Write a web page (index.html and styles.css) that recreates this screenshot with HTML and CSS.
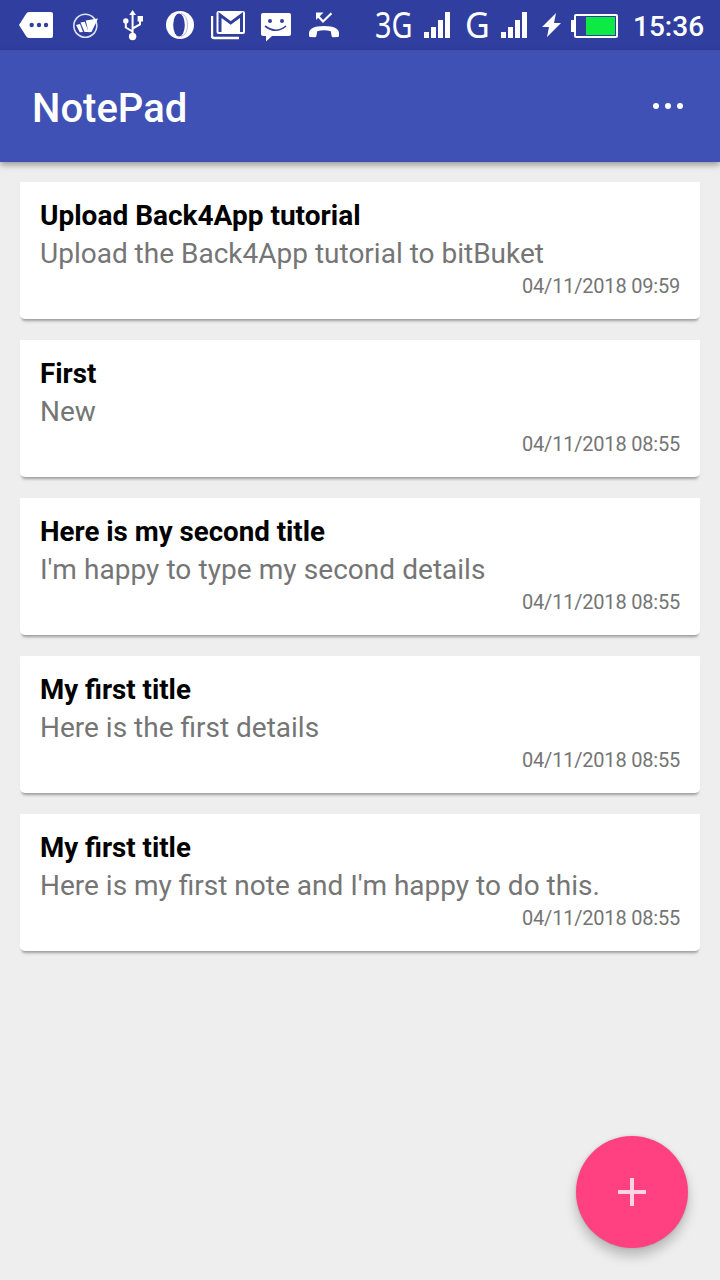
FILE: index.html
```html
<!DOCTYPE html>
<html lang="en">
<head>
<meta charset="utf-8">
<title>NotePad</title>
<link rel="stylesheet" href="styles.css">
</head>
<body>
<div class="screen">
  <div class="status">
    <svg class="icon" width="34" height="50" viewBox="19 0 34 50"><path fill="#fff" d="M19 25l7-11q1.200-2 3-2h22q2 0 2 2v22q0 2-2 2H29q-1.800 0-3-2z"/><g fill="#303f9f"><circle cx="31.700" cy="25" r="2.200"/><circle cx="39" cy="25" r="2.200"/><circle cx="46" cy="25" r="2.200"/></g></svg>
    <svg class="icon wps" width="26" height="50" viewBox="73 0 26 50"><circle cx="85.300" cy="25.800" r="11.500" fill="none" stroke="#dfe2f5" stroke-width="1.600"/><path fill="#fff" d="M76 25l4-1 3 8-3.200.3zM80.500 22.500l4.200-.8 3.800 10-4 .3zM85.700 20.500l12.300-2-6.500 13.500-3 .2z"/></svg>
    <svg class="icon usb" width="22" height="50" viewBox="122 0 22 50"><g fill="none" stroke="#fff" stroke-width="2"><path d="M132.600 36V13M132.600 31.500l-6.800-4v-6M132.600 28.500l7.400-4V19"/></g><path fill="#fff" d="M132.600 10l3.400 5h-6.800zM137.600 16h5.400v5.400h-5.400z"/><circle cx="132.600" cy="36.500" r="3.700" fill="#fff"/><circle cx="125.800" cy="21" r="2.700" fill="#fff"/></svg>
    <svg class="icon opera" width="28" height="50" viewBox="166 0 28 50"><circle cx="180" cy="25" r="14" fill="#fff"/><ellipse cx="179" cy="25" rx="5.800" ry="11.500" fill="#303f9f"/><path d="M181 13.500q6.500 2 6.500 11.500t-6.500 11.500" fill="none" stroke="#303f9f" stroke-opacity=".45" stroke-width=".8"/></svg>
    <svg class="icon gmail" width="34" height="50" viewBox="211 0 34 50"><path d="M212 16v20q0 2 2 2h25" fill="none" stroke="#fff" stroke-width="2.400"/><rect x="216.500" y="11" width="28.500" height="23" rx="2" fill="#fff"/><path d="M220 32V15l10.700 8 10.800-8v17" fill="none" stroke="#303f9f" stroke-width="3"/></svg>
    <svg class="icon sms" width="30" height="50" viewBox="261 0 30 50"><path fill="#fff" d="M263 13h26q2 0 2 2v19q0 2-2 2h-17l-6 5.500V36h-3q-2 0-2-2V15q0-2 2-2z"/><g fill="#303f9f"><circle cx="270" cy="21" r="2"/><circle cx="282" cy="21" r="2"/></g><path d="M265 26q11 8.500 21 0" fill="none" stroke="#303f9f" stroke-width="1.600"/></svg>
    <svg class="icon missed" width="32" height="50" viewBox="308 0 32 50"><path d="M331.500 13.300l-8.500 8.200-5-5.500" fill="none" stroke="#fff" stroke-width="2.200"/><path fill="#fff" d="M316 12.500h7.500L316 20z"/><path fill="#fff" d="M309 33.500q0-7.500 15-7.500t15 7.500v2q0 1-1 1.500l-5 .2q-1 0-1.300-1l-.9-5q-6.800-2-13.600 0l-.9 5q-.3 1-1.300 1l-5-.2q-1-.5-1-1.500z"/></svg>
    <span class="net net-a">3G</span>
    <svg class="icon bars-a" width="26" height="50" viewBox="0 0 26 50"><path fill="#fff" d="M0 32h5v6H0zM7 27h5v11H7zM14 20h5v18h-5zM21 12h5v26h-5z"/></svg>
    <span class="net net-b">G</span>
    <svg class="icon bars-b" width="26" height="50" viewBox="0 0 26 50"><path fill="#fff" d="M0 32h5v6H0zM7 27h5v11H7zM14 20h5v18h-5zM21 12h5v26h-5z"/></svg>
    <svg class="icon bolt" width="19" height="50" viewBox="542 0 19 50"><path fill="#fff" d="M556 13l-14 14h7l-2 10 14-14h-7z"/></svg>
    <svg class="icon battery" width="47" height="50" viewBox="571 0 47 50"><path fill="#fff" d="M571 20h4v12h-4z"/><rect x="575" y="15" width="42" height="22" rx="1" fill="none" stroke="#fff" stroke-width="2"/><path fill="#0cea43" d="M586 17h29v18h-29z"/></svg>
    <span class="clock">15:36</span>
  </div>
  <header class="appbar">
    <h1 class="title">NotePad</h1>
    <svg class="more" width="32" height="8" viewBox="0 0 32 8" fill="#fff"><circle cx="4" cy="4" r="3"/><circle cx="16" cy="4" r="3"/><circle cx="28" cy="4" r="3"/></svg>
  </header>
  <main class="notes">
    <article class="note"><h2 class="name">Upload Back4App tutorial</h2><p class="details">Upload the Back4App tutorial to bitBuket</p><time class="date">04/11/2018 09:59</time></article>
    <article class="note"><h2 class="name snug">First</h2><p class="details">New</p><time class="date">04/11/2018 08:55</time></article>
    <article class="note"><h2 class="name snug">Here is my second title</h2><p class="details loose">I'm happy to type my second details</p><time class="date">04/11/2018 08:55</time></article>
    <article class="note"><h2 class="name snug">My first title</h2><p class="details">Here is the first details</p><time class="date">04/11/2018 08:55</time></article>
    <article class="note"><h2 class="name snug">My first title</h2><p class="details">Here is my first note and I'm happy to do this.</p><time class="date">04/11/2018 08:55</time></article>
  </main>
  <button class="fab" aria-label="Add note"><svg width="28" height="28" viewBox="0 0 28 28"><path fill="#ffd3e1" d="M12 0h4v12h12v4H16v12h-4V16H0v-4h12z"/></svg></button>
</div>
</body>
</html>
```
FILE: styles.css
```css
* { box-sizing: border-box; }
body { margin: 0; font-family: Roboto, "Liberation Sans", sans-serif; }
.screen { position: relative; width: 720px; height: 1280px; background: #eee; overflow: hidden; }
.status { display: flex; height: 50px; padding-left: 19px; background: #303f9f; color: #fff; }
.icon { flex: none; display: block; }
.wps { margin-left: 20px; }
.usb { margin-left: 23px; }
.opera { margin-left: 22px; }
.gmail { margin-left: 17px; }
.sms { margin-left: 16px; }
.missed { margin-left: 17px; }
.net { flex: none; height: 52px; margin-top: -2px; font: 37px/52px "Noto Sans", sans-serif; transform-origin: 0 0; white-space: nowrap; }
.net-a { width: 50px; margin-left: 35px; margin-right: -12px; transform: scaleX(.78); }
.bars-a { margin-left: 11px; }
.net-b { width: 28px; margin-left: 15px; margin-right: -3px; transform: scaleX(.92); }
.bars-b { margin-left: 11px; }
.bolt { margin-left: 15px; }
.battery { margin-left: 10px; }
.clock { margin-left: 15px; font-size: 28px; font-weight: 500; line-height: 54px; white-space: nowrap; }
.appbar { display: flex; justify-content: space-between; align-items: center; height: 112px; padding: 0 36px 0 32px; background: #3f51b5; box-shadow: 0 3px 6px rgba(0, 0, 0, .35); }
.title { margin: 6px 0 0; color: #fff; font-size: 40px; font-weight: 500; line-height: 48px; }
.more { display: block; }
.notes { display: grid; gap: 21px; padding: 20px; }
.note { display: flex; flex-direction: column; height: 137px; padding: 15px 20px 0; background: #fff; border-radius: 0 0 5px 5px; box-shadow: 0 4px 3px -2px rgba(0, 0, 0, .35); }
.name { margin: 0; color: #000; font-size: 28px; font-weight: 700; line-height: 38px; }
.snug { font-size: 27.700px; }
.details { margin: 0; color: #757575; font-size: 28px; line-height: 38px; }
.loose { word-spacing: .3px; }
.date { align-self: flex-end; color: #757575; font-size: 20px; letter-spacing: -.2px; line-height: 27px; }
.fab { position: absolute; right: 32px; bottom: 32px; display: grid; place-items: center; width: 112px; height: 112px; padding: 0; border: 0; border-radius: 50%; background: #ff4081; box-shadow: 0 8px 12px rgba(0, 0, 0, .22), 0 0 3px rgba(0, 0, 0, .15); }
```
